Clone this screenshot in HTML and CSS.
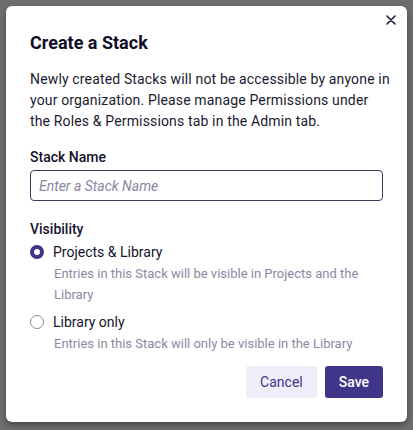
FILE: index.html
```html
<!DOCTYPE html>
<html>
<head>
<meta charset="utf-8">
<link rel="stylesheet" href="styles.css">
</head>
<body>
<div class="overlay">
  <div class="modal">
    <button class="close" aria-label="Close">
      <svg width="10" height="10" viewBox="0 0 10 10"><path d="M1 1L9 9M9 1L1 9" stroke="#1c1b33" stroke-width="1.6" stroke-linecap="round"/></svg>
    </button>
    <h2 class="title">Create a Stack</h2>
    <p class="intro">Newly created Stacks will not be accessible by anyone in your organization. Please manage Permissions under the Roles &amp; Permissions tab in the Admin tab.</p>
    <label class="label" for="name">Stack Name</label>
    <input id="name" class="input" placeholder="Enter a Stack Name">
    <div class="label vis">Visibility</div>
    <div class="option">
      <span class="radio checked"></span>
      <div class="opt-text">
        <div class="opt-title">Projects &amp; Library</div>
        <div class="opt-desc">Entries in this Stack will be visible in Projects and the Library</div>
      </div>
    </div>
    <div class="option">
      <span class="radio"></span>
      <div class="opt-text">
        <div class="opt-title">Library only</div>
        <div class="opt-desc">Entries in this Stack will only be visible in the Library</div>
      </div>
    </div>
    <div class="actions">
      <button class="btn cancel">Cancel</button>
      <button class="btn save">Save</button>
    </div>
  </div>
</div>
</body>
</html>
```
FILE: styles.css
```css
html, body {
  margin: 0;
  padding: 0;
  background: #6e6e6e;
  font-family: Roboto, "Liberation Sans", sans-serif;
}
.overlay {
  padding: 6px;
  height: 430px;
  box-sizing: border-box;
}
.modal {
  position: relative;
  background: #fff;
  border-radius: 6px;
  padding: 25px 24px 24px 24px;
  height: 416px;
  box-sizing: border-box;
  box-shadow: 0 3px 6px rgba(0,0,0,0.35);
  color: #16152b;
  display: flex;
  flex-direction: column;
}
.close {
  position: absolute;
  top: 9px;
  right: 11px;
  border: 0;
  background: none;
  padding: 0;
  width: 10px;
  height: 10px;
  display: flex;
}
.title {
  margin: 0;
  font-size: 18px;
  font-weight: 700;
  line-height: 24px;
  color: #0f0e26;
}
.intro {
  margin: 14px -8px 0 0;
  font-size: 14px;
  letter-spacing: 0.15px;
  line-height: 21px;
  color: #1b1a30;
}
.label {
  margin-top: 15px;
  font-size: 14px;
  font-weight: 500;
  line-height: 20px;
  color: #14132b;
}
.input {
  margin-top: 3px;
  height: 31px;
  box-sizing: border-box;
  border: 1px solid #3d3a5a;
  border-radius: 4px;
  padding: 0 8px;
  font-family: inherit;
  font-size: 14px;
  font-style: italic;
  outline: none;
}
.input::placeholder {
  color: #8a86a3;
  font-style: italic;
}
.vis {
  margin-top: 18px;
}
.option {
  display: flex;
  gap: 9px;
  margin-top: 2px;
}
.option + .option {
  margin-top: 6px;
}
.radio {
  width: 14px;
  height: 14px;
  box-sizing: border-box;
  border-radius: 50%;
  border: 1px solid #8d8a9e;
  margin-top: 4px;
  flex: none;
  background: #fff;
}
.radio.checked {
  border: 4.5px solid #3f3589;
  background: #fff;
}
.opt-title {
  font-size: 14px;
  line-height: 22px;
  color: #15142c;
}
.opt-desc {
  font-size: 13px;
  line-height: 21px;
  color: #8c88a3;
  padding-left: 1px;
}
.actions {
  margin-top: auto;
  display: flex;
  justify-content: flex-end;
  gap: 8px;
}
.btn {
  border: 0;
  border-radius: 3px;
  height: 32px;
  font-family: inherit;
  font-size: 14px;
  padding: 0 14px;
}
.cancel {
  background: #efedf8;
  color: #3f3589;
}
.save {
  background: #3f3589;
  color: #fff;
  font-weight: 500;
}
```
